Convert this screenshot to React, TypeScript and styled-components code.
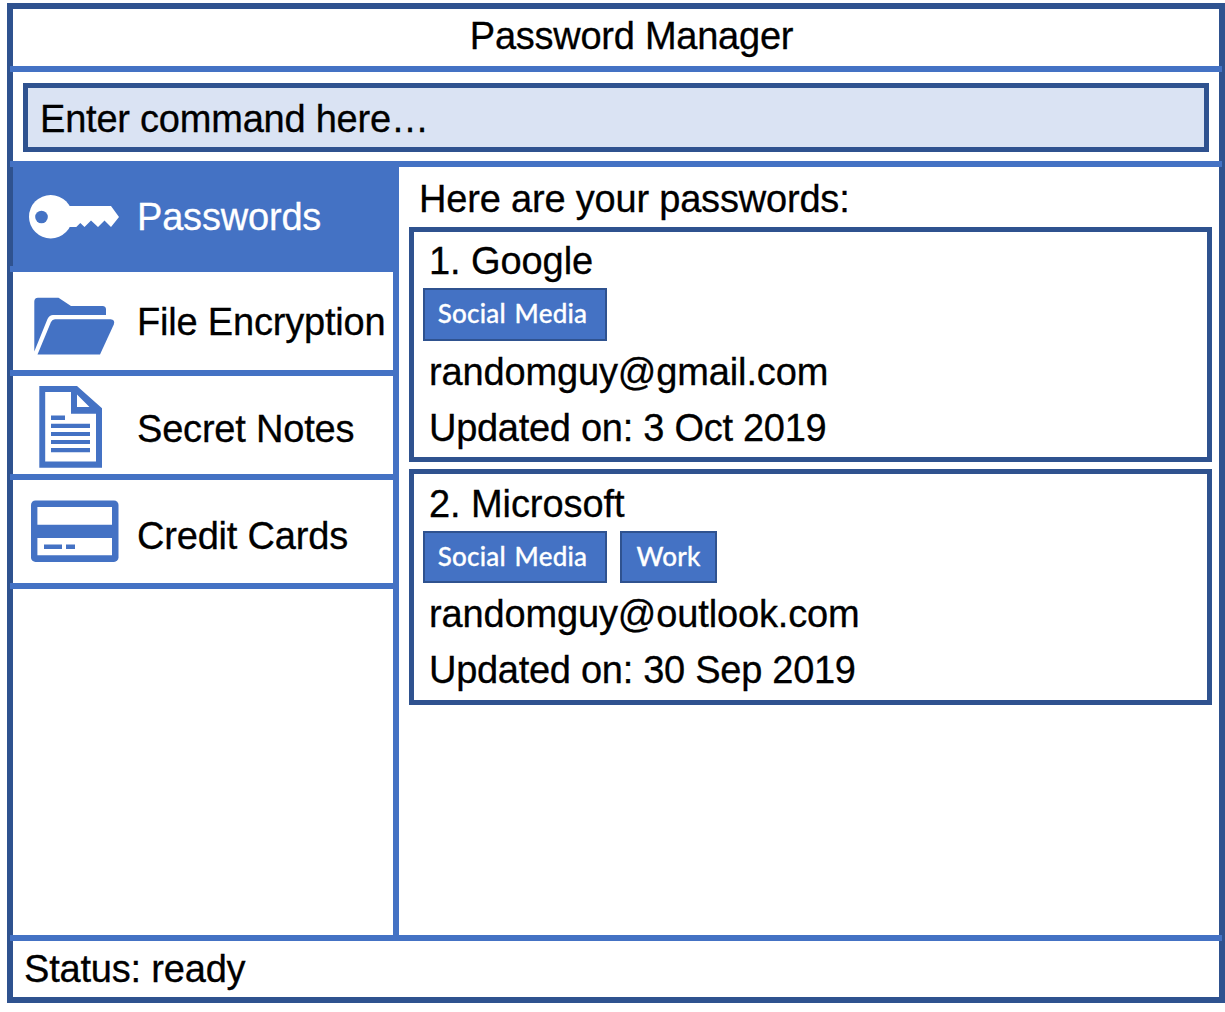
import React from "react";
import styled, { createGlobalStyle } from "styled-components";

const BLUE = "#4472c4";
const NAVY = "#2f528f";

const GlobalStyle = createGlobalStyle`
  * { box-sizing: border-box; }
  body { margin: 0; background: #fff; }
`;

const Page = styled.div`
  width: 1225px;
  height: 1012px;
  padding: 3px 0 9px 7px;
  overflow: hidden;
  background: #fff;
  color: #000;
  font-family: "Liberation Sans", Arial, sans-serif;
  font-size: 38px;
  letter-spacing: -0.19px;
  line-height: 56px;
  white-space: nowrap;
  -webkit-text-stroke: 0.3px currentColor;
`;

const Frame = styled.div`
  display: flex;
  flex-direction: column;
  height: 1000px;
  border: 6px solid ${NAVY};
`;

const Rule = styled.div<{ $right?: number }>`
  flex: none;
  height: 6px;
  margin: 0 ${(p) => p.$right ?? -3}px 0 -3px;
  background: ${BLUE};
`;

const TitleBar = styled.header`
  flex: none;
  height: 57px;
  padding-left: 31px;
  letter-spacing: -0.25px;
  line-height: 55px;
  text-align: center;
`;

const CommandBar = styled.div`
  flex: none;
  height: 89px;
  padding: 11px 10px 9px;
`;

const CommandBox = styled.div`
  height: 69px;
  padding-left: 12px;
  border: 5px solid ${NAVY};
  background: #dae3f3;
  letter-spacing: -0.22px;
  line-height: 63px;
`;

const Body = styled.div`
  display: flex;
  flex: 1;
  min-height: 0;
`;

const Sidebar = styled.nav`
  width: 386px;
  flex: none;
  border-right: 6px solid ${BLUE};
`;

const NavItem = styled.div<{ $height: number; $active?: boolean }>`
  display: flex;
  height: ${(p) => p.$height}px;
  background: ${(p) => (p.$active ? BLUE : "transparent")};
  color: ${(p) => (p.$active ? "#fff" : "#000")};
`;

const NavIcon = styled.svg`
  flex: none;
  width: 121px;
  height: 98px;
`;

const NavLabel = styled.span<{ $top: number }>`
  padding: ${(p) => p.$top}px 0 0 3px;
`;

const Content = styled.main`
  flex: 1;
  padding: 4px 7px 0 10px;
`;

const Heading = styled.div`
  height: 56px;
  padding-left: 10px;
`;

const Card = styled.section<{ $height: number }>`
  height: ${(p) => p.$height}px;
  margin-bottom: 7px;
  padding-left: 9px;
  border: 5px solid ${NAVY};
`;

const CardName = styled.div<{ $height: number }>`
  height: ${(p) => p.$height}px;
  padding-left: 6px;
  letter-spacing: -0.08px;
  line-height: ${(p) => p.$height + 3}px;
`;

const CardLine = styled.div<{ $tracking?: number }>`
  height: 56px;
  padding-left: 6px;
  letter-spacing: ${(p) => p.$tracking ?? -0.14}px;
  line-height: 57px;
`;

const Tags = styled.div<{ $height: number }>`
  display: flex;
  gap: 13px;
  height: ${(p) => p.$height}px;
  padding-bottom: 3px;
`;

const Tag = styled.span<{ $width: number }>`
  width: ${(p) => p.$width}px;
  padding-right: 5px;
  border: 2px solid ${NAVY};
  background: ${BLUE};
  color: #fff;
  font-family: Lato, sans-serif;
  font-size: 26px;
  font-weight: 500;
  letter-spacing: 0.2px;
  word-spacing: 2px;
  line-height: 47px;
  text-align: center;

  & + & {
    padding-right: 0;
  }
`;

const StatusBar = styled.footer`
  flex: none;
  height: 56px;
  padding-left: 11px;
`;

const KeyIcon = () => (
  <NavIcon viewBox="0 0 121 98" fill="#fff">
    <circle cx="37.7" cy="49.7" r="21.7" />
    <path d="M54 39H98L106 50L98 60L91.5 53.5L85 60L78 53.5L71.5 60L67.3 56L63.3 60H54Z" />
    <circle cx="28.5" cy="50" r="6.3" fill={BLUE} />
  </NavIcon>
);

const FolderIcon = () => (
  <NavIcon viewBox="0 0 121 98" fill={BLUE}>
    <path d="M21.3 79.5V29.5Q21.3 25.7 25 25.7H45.5L58 34H89.5Q93 34 93 37.5V43H40Q36.5 43 34.5 47Z" />
    <path d="M24.5 82.5L38 50Q39.3 47.3 42 47.3H97.5Q102.5 47.5 100.8 52.5L87 82.5Z" />
  </NavIcon>
);

const NoteIcon = () => (
  <NavIcon viewBox="0 0 121 98" fill={BLUE}>
    <path
      fillRule="evenodd"
      d="M26.3 10H64L89 32.3V91.7H26.3ZM32.2 16V85.5H83V37.7H58V16ZM64 18.5V31H76.5Z"
    />
    <path d="M38 39.5H52V44H38ZM38 47.7H77V51.9H38ZM38 56H77V60.1H38ZM38 64H77V68.1H38ZM38 72H77V76.3H38Z" />
  </NavIcon>
);

const CreditCardIcon = () => (
  <NavIcon viewBox="0 0 121 98" fill={BLUE}>
    <rect x="18" y="20.5" width="87.5" height="61.4" rx="4.5" />
    <path fill="#fff" d="M24.4 27H99V44.8H24.4ZM24.4 58H99V75.2H24.4Z" />
    <path d="M31 64.6H49V69H31ZM53 64.6H62V69H53Z" />
  </NavIcon>
);

const navItems = [
  { label: "Passwords", Icon: KeyIcon, height: 99, top: 22, active: true },
  { label: "File Encryption", Icon: FolderIcon, height: 98, top: 22 },
  { label: "Secret Notes", Icon: NoteIcon, height: 98, top: 25 },
  { label: "Credit Cards", Icon: CreditCardIcon, height: 103, top: 28 },
];

const entries = [
  {
    name: "1. Google",
    tags: [{ text: "Social Media", width: 184 }],
    user: "randomguy@gmail.com",
    updated: "Updated on: 3 Oct 2019",
    height: 235,
    nameHeight: 56,
    tagsHeight: 56,
  },
  {
    name: "2. Microsoft",
    tags: [
      { text: "Social Media", width: 184 },
      { text: "Work", width: 97 },
    ],
    user: "randomguy@outlook.com",
    updated: "Updated on: 30 Sep 2019",
    height: 236,
    nameHeight: 57,
    tagsHeight: 55,
  },
];

export default function App() {
  return (
    <>
      <GlobalStyle />
      <Page>
        <Frame>
          <TitleBar>Password Manager</TitleBar>
          <Rule />
          <CommandBar>
            <CommandBox>Enter command here…</CommandBox>
          </CommandBar>
          <Rule />
          <Body>
            <Sidebar>
              {navItems.map(({ label, Icon, height, top, active }) => (
                <React.Fragment key={label}>
                  <NavItem $height={height} $active={active}>
                    <Icon />
                    <NavLabel $top={top}>{label}</NavLabel>
                  </NavItem>
                  <Rule $right={0} />
                </React.Fragment>
              ))}
            </Sidebar>
            <Content>
              <Heading>Here are your passwords:</Heading>
              {entries.map((entry) => (
                <Card key={entry.name} $height={entry.height}>
                  <CardName $height={entry.nameHeight}>{entry.name}</CardName>
                  <Tags $height={entry.tagsHeight}>
                    {entry.tags.map((tag) => (
                      <Tag key={tag.text} $width={tag.width}>
                        {tag.text}
                      </Tag>
                    ))}
                  </Tags>
                  <CardLine>{entry.user}</CardLine>
                  <CardLine $tracking={-0.28}>{entry.updated}</CardLine>
                </Card>
              ))}
            </Content>
          </Body>
          <Rule />
          <StatusBar>Status: ready</StatusBar>
        </Frame>
      </Page>
    </>
  );
}
